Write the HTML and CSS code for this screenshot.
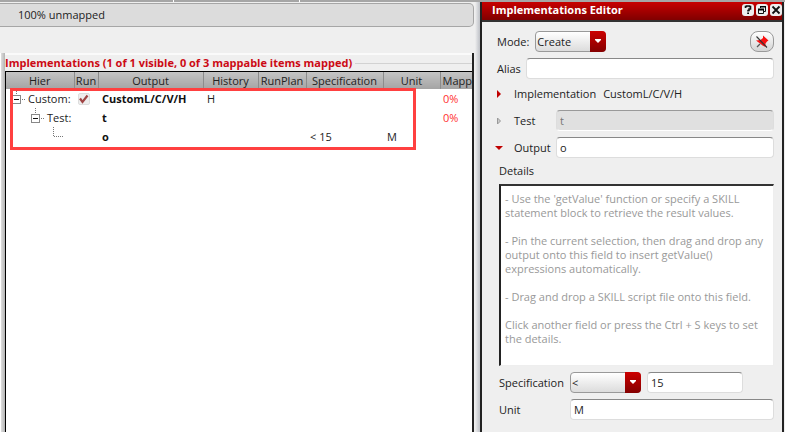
FILE: index.html
```html
<!DOCTYPE html>
<html lang="en">
<head>
<meta charset="utf-8">
<title>Implementations Editor</title>
<link rel="stylesheet" href="styles.css">
</head>
<body>
<div class="toolbar-edge"><span></span><span></span><span></span></div>
<div class="workspace">
  <main class="planner">
    <div class="progress">100% unmapped</div>
    <section class="tree">
      <h2 class="tree-title">Implementations (1 of 1 visible, 0 of 3 mappable items mapped)</h2>
      <div class="tree-frame">
        <table class="tree-table">
          <colgroup>
            <col class="c-hier"><col class="c-run"><col class="c-output"><col class="c-history"><col class="c-plan"><col class="c-spec"><col class="c-unit"><col>
          </colgroup>
          <thead>
            <tr><th>Hier</th><th>Run</th><th>Output</th><th>History</th><th>RunPlan</th><th>Specification</th><th>Unit</th><th class="last">Mapp</th></tr>
          </thead>
          <tbody>
            <tr>
              <td><div class="node">
                <svg width="16" height="19" viewBox="0 0 16 19"><path d="M7.500 0v5M13 10.500h3" stroke="#777" stroke-dasharray="1 1" fill="none"/><rect x="3.500" y="6.500" width="8" height="8" fill="#fff" stroke="#888"/><path d="M5 10.500h5" stroke="#111"/></svg>
                <span>Custom:</span></div></td>
              <td><label class="check"><input type="checkbox" checked aria-label="Run CustomL/C/V/H"><svg width="12" height="12" viewBox="0 0 12 12"><path d="M2 5.500 4.500 9 9.500 2.500" fill="none" stroke="#a04545" stroke-width="2.200"/></svg></label></td>
              <td class="strong">CustomL/C/V/H</td><td>H</td><td></td><td></td><td></td><td class="percent">0%</td>
            </tr>
            <tr>
              <td><div class="node level-1">
                <svg width="16" height="19" viewBox="0 0 16 19"><path d="M7.500 0v5M13 10.500h3" stroke="#777" stroke-dasharray="1 1" fill="none"/><rect x="3.500" y="6.500" width="8" height="8" fill="#fff" stroke="#888"/><path d="M5 10.500h5" stroke="#111"/></svg>
                <span>Test:</span></div></td>
              <td></td><td class="strong">t</td><td></td><td></td><td></td><td></td><td class="percent">0%</td>
            </tr>
            <tr>
              <td><div class="node level-2">
                <svg width="18" height="19" viewBox="0 0 18 19"><path d="M7.500 0v10M8 9.500h10" stroke="#777" stroke-dasharray="1 1" fill="none"/></svg></div></td>
              <td></td><td class="strong">o</td><td></td><td></td><td>&lt; 15</td><td>M</td><td></td>
            </tr>
          </tbody>
        </table>
        <div class="highlight"></div>
      </div>
    </section>
  </main>

  <aside class="editor">
    <header class="titlebar">
      <h1>Implementations Editor</h1>
      <button type="button" aria-label="Help"><svg width="12" height="12" viewBox="0 0 12 12"><path d="M3.500 4V2.500h1V2h3v.5h1V5H7v1.500H6v1" fill="none" stroke="#111" stroke-width="1.600"/><path d="M5.200 8.500H7V10H5.200z"/></svg></button>
      <button type="button" aria-label="Float"><svg width="12" height="12" viewBox="0 0 12 12"><path d="M4.500 4V2.500h5v5H8" fill="none" stroke="#111"/><path d="M4 2h6v1.500H4z"/><path d="M2.500 5.500h5v4h-5z" fill="#eee" stroke="#111"/><path d="M2 4.500h6v2H2z"/></svg></button>
      <button type="button" aria-label="Close"><svg width="12" height="12" viewBox="0 0 12 12"><path d="m2.500 2.500 7 7m0-7-7 7" stroke="#111" stroke-width="1.800"/></svg></button>
    </header>
    <form class="form">
      <div class="row mode">
        <label for="mode">Mode:</label>
        <div class="combo"><select id="mode"><option>Create</option></select><span class="drop"><svg width="8" height="5" viewBox="0 0 8 5"><path d="M1 0h6v1L4 4 1 1z" fill="#fff"/></svg></span></div>
        <button type="button" class="pin" aria-label="Pin selection"><svg width="14" height="14" viewBox="0 0 14 14"><path d="M8 .5 13.500 5.500 12 6.500 10.500 8.500 10.500 12 7.500 10.500 5 8.500 1 5.500 5.500 5 8 3z" fill="#f81010"/><path d="m1.500 1.500 10.500 11" stroke="#333" stroke-width="1.100"/><path d="m5 9-3 3" stroke="#555" stroke-width="1.200"/></svg></button>
      </div>
      <div class="row alias"><label for="alias">Alias</label><input id="alias" type="text"></div>
      <div class="row fold">
        <button type="button" aria-label="Expand implementation"><svg width="10" height="10" viewBox="0 0 10 10"><path d="M3 1v8l4-4z" fill="#c00000"/></svg></button>
        <span class="impl">Implementation</span><span>CustomL/C/V/H</span>
      </div>
      <div class="row fold">
        <button type="button" disabled aria-label="Expand test"><svg width="10" height="10" viewBox="0 0 10 10"><path d="M3.500 2v6l3-3z" fill="#ccc" stroke="#999"/></svg></button>
        <label for="test">Test</label><input id="test" type="text" value="t" disabled>
      </div>
      <div class="row fold">
        <button type="button" aria-label="Collapse output"><svg width="10" height="10" viewBox="0 0 10 10"><path d="M1 3h8L5 7z" fill="#c00000"/></svg></button>
        <label for="output">Output</label><input id="output" type="text" value="o">
      </div>
      <div class="details">
        <label for="details">Details</label>
        <textarea id="details" spellcheck="false">- Use the 'getValue' function or specify a SKILL
statement block to retrieve the result values.

- Pin the current selection, then drag and drop any
output onto this field to insert getValue()
expressions automatically.

- Drag and drop a SKILL script file onto this field.

Click another field or press the Ctrl + S keys to set
the details.</textarea>
      </div>
      <div class="row spec">
        <label for="operator">Specification</label>
        <div class="combo"><select id="operator"><option>&lt;</option></select><span class="drop"><svg width="8" height="5" viewBox="0 0 8 5"><path d="M1 0h6v1L4 4 1 1z" fill="#fff"/></svg></span></div>
        <input class="limit" type="text" value="15" aria-label="Specification value">
      </div>
      <div class="row spec"><label for="unit">Unit</label><input id="unit" type="text" value="M"></div>
    </form>
  </aside>
</div>
</body>
</html>
```
FILE: styles.css
```css
* { box-sizing: border-box; }

body {
  margin: 0;
  min-height: 100vh;
  display: flex;
  flex-direction: column;
  background: #efefef;
  color: #222;
  font: 11px/14px "Open Sans", "Noto Sans", sans-serif;
}

h1, h2 { margin: 0; font-size: 11px; line-height: 14px; }
input, select, textarea, button { font: inherit; color: inherit; margin: 0; }
svg { display: block; flex: none; }

.toolbar-edge {
  display: grid;
  grid-template-columns: 22% 16% 1fr;
  gap: 1px;
  height: 2px;
  background: #fff;
}
.toolbar-edge span { background: #a6a6a6; }

.workspace {
  flex: 1;
  display: grid;
  grid-template-columns: minmax(0, 1fr) 305px;
}

/* Left pane */
.planner {
  display: flex;
  flex-direction: column;
  padding-right: 6px;
  background: linear-gradient(90deg, #efefef, #d0d2d6 3px, #bfc1c6) right / 5px 100% no-repeat;
}
.progress {
  height: 24px;
  margin: 1px 0 26px;
  padding: 4px 18px;
  border: solid #a6a6a6;
  border-width: 1px 1px 1px 0;
  border-radius: 0 5px 5px 0;
  background: #dcdcdc;
}
.tree {
  flex: 1;
  display: flex;
  flex-direction: column;
  padding-left: 4px;
  border-left: 1px solid #fff;
  border-right: 2px solid #222;
  background: linear-gradient(90deg, #dedede, #b4b4b4 4px, #efefef 4px);
}
.tree-title {
  display: flex;
  align-items: center;
  gap: 3px;
  height: 18px;
  border-top: 2px solid #fafafa;
  color: #cc0a14;
  white-space: nowrap;
}
.tree-title::after { content: ""; flex: 1; height: 1px; background: #d2d2d2; }
.tree-frame {
  flex: 1;
  position: relative;
  overflow: hidden;
  border: solid #000;
  border-width: 1px 0 0 1px;
  background: #fff;
}
.tree-table { width: 100%; table-layout: fixed; border-collapse: collapse; }
.c-hier { width: 68px; }
.c-run { width: 24px; }
.c-output { width: 105px; }
.c-history { width: 55px; }
.c-plan { width: 48px; }
.c-spec { width: 77px; }
.c-unit { width: 57px; }
.tree-table th {
  height: 17px;
  padding: 0;
  border-right: 1px solid #8c8c8c;
  background: linear-gradient(#c4c4c4, #a4a4a4);
  font-weight: 400;
  white-space: nowrap;
}
.tree-table th.last { padding-left: 2px; border: 0; text-align: left; }
.tree-table td { height: 19px; padding: 0 4px; white-space: nowrap; }
.tree-table td:first-child { padding: 0; }
.tree-table .strong { font-weight: 700; color: #111; }
.tree-table .percent { padding-left: 3px; color: #ff3030; }
.node { display: flex; align-items: center; gap: 3px; padding-left: 3px; height: 19px; }
.level-1 { padding-left: 22px; }
.level-2 { padding-left: 40px; }
.check { display: block; position: relative; width: 12px; height: 12px; }
.check input {
  appearance: none;
  display: block;
  width: 12px;
  height: 12px;
  border-radius: 2px;
  background: #eee;
  border: 1px solid #ddd;
}
.check svg { position: absolute; inset: 0; }
.highlight {
  position: absolute;
  left: 4px;
  top: 16px;
  width: 406px;
  height: 62px;
  border: 3px solid #ff4040;
}

/* Right pane */
.editor {
  margin-right: 1px;
  border: solid #222;
  border-width: 0 2px;
}
.titlebar {
  display: flex;
  align-items: center;
  gap: 2px;
  height: 20px;
  padding: 0 0 2px 10px;
  border-bottom: 2px solid #333;
  background: linear-gradient(#c80000, #800000);
}
.titlebar h1 { flex: 1; color: #fff; }
.titlebar button {
  display: grid;
  place-items: center;
  width: 12px;
  height: 12px;
  padding: 0;
  border: 0;
  border-radius: 3px;
  background: #eee;
}

.form { padding: 9px 8px 11px 15px; }
.row { display: flex; align-items: center; height: 21px; margin-bottom: 6px; }
.row input {
  flex: 1;
  min-width: 0;
  height: 21px;
  padding: 0 3px;
  border: 1px solid #ddd;
  border-top: 1px solid #888;
  border-radius: 4px;
  background: #fff;
}
.row input:disabled { background: #e0e0e0; border-color: #999 #ddd #fff; color: #777; }
.combo { position: relative; width: 71px; height: 21px; }
.combo select {
  appearance: none;
  width: 100%;
  height: 100%;
  padding: 0 18px 0 1px;
  border: 1px solid #999;
  border-radius: 4px;
  background: linear-gradient(#fff, #dcdcdc);
}
.combo .drop {
  position: absolute;
  top: 0;
  right: 0;
  display: grid;
  place-items: center;
  width: 16px;
  height: 21px;
  border-radius: 0 4px 4px 0;
  background: linear-gradient(#cc0000, #840000);
  pointer-events: none;
}
.mode { gap: 6px; }
.pin {
  display: grid;
  place-items: center;
  width: 24px;
  height: 21px;
  margin-left: auto;
  padding: 0;
  border: 1px solid #999;
  border-radius: 8px;
  background: linear-gradient(#fff, #d4d4d4);
}
.alias { gap: 5px; margin-bottom: 4px; }
.fold { margin-left: -3px; }
.fold button { width: 10px; height: 10px; margin-right: 10px; padding: 0; border: 0; background: none; }
.fold label { width: 42px; }
.impl { margin-right: 7px; }
.details { padding-left: 2px; margin-bottom: 6px; }
.details label { display: block; margin-bottom: 6px; }
.details textarea {
  display: block;
  width: 100%;
  height: 182px;
  padding: 6px 4px;
  border: solid #eee;
  border-width: 2px 1px 1px 2px;
  border-top-color: #333;
  border-left-color: #222;
  background: #fff;
  color: #999;
  line-height: 14px;
  resize: none;
  overflow: hidden;
}
.spec { padding-left: 2px; }
.spec label { width: 71px; }
.spec .limit { flex: none; width: 96px; margin-left: 6px; }
```
